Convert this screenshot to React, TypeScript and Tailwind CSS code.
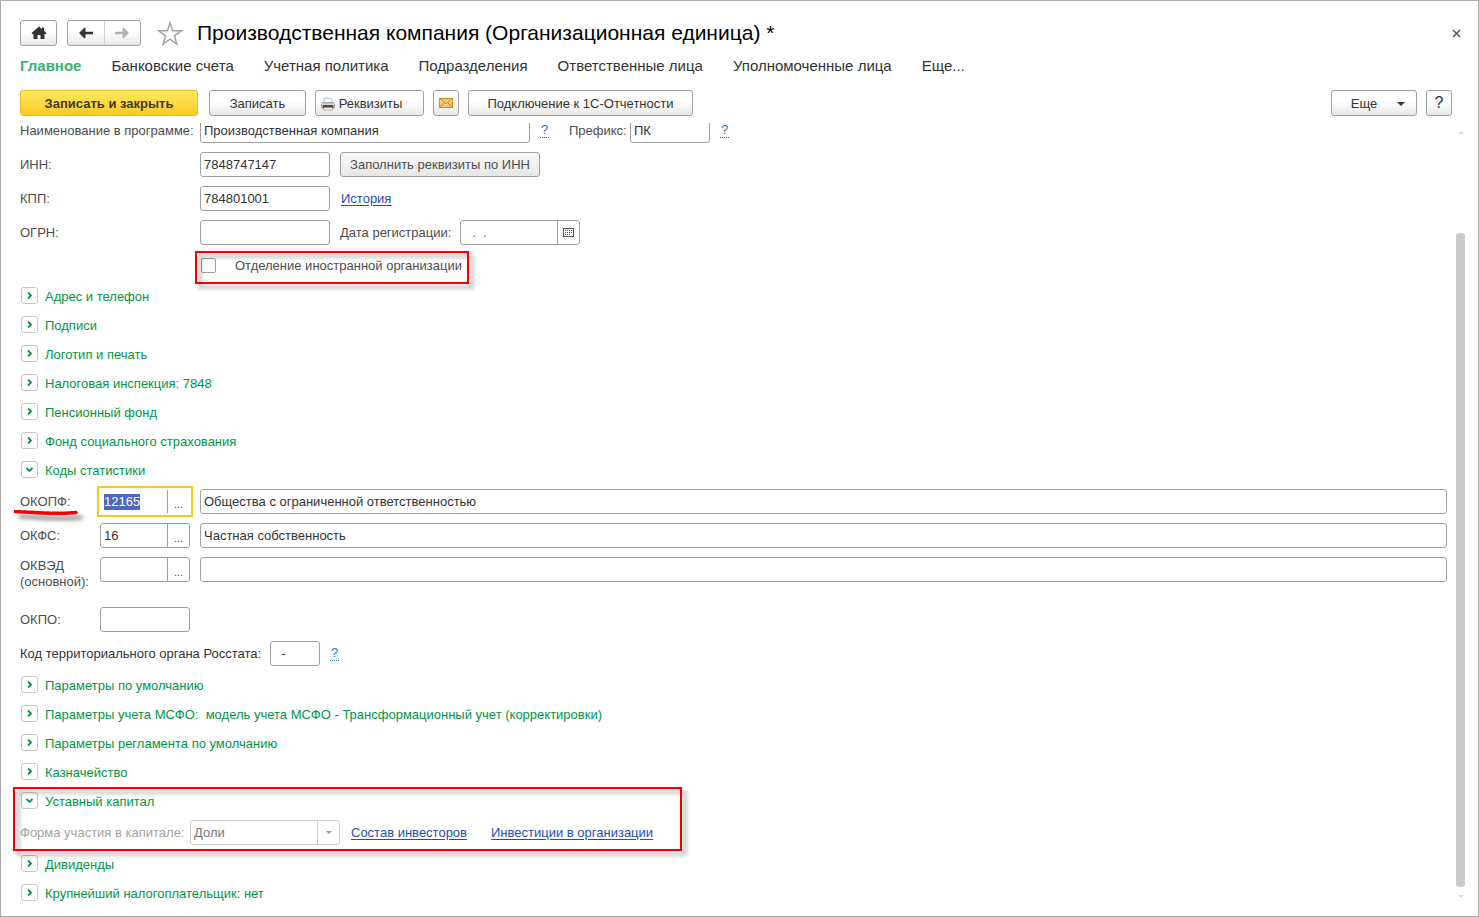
import { useEffect, useRef, useState } from 'react';
import type { ReactNode } from 'react';

const buttonLook =
  'flex h-[26px] items-center justify-center rounded-[3px] border border-[#a0a0a0] bg-linear-to-b from-white from-40% to-[#e9e9e9] text-[#333]';
const fieldLook =
  'h-[25px] rounded-[3px] border border-[#a0a0a0] bg-white px-[3px] text-[#333] outline-none';
const linkLook = 'text-[#1d50b5] underline underline-offset-2';

function HomeIcon() {
  return (
    <svg width="16" height="14" viewBox="0 0 16 14" fill="#333" aria-hidden="true">
      <path d="M8 0.500 0.500 7 1.500 8.200 2.500 7.700V13H6.500V9h3v4h4V7.700l1 .5 1-1.200L13 4.700V1.500h-2v1.600z" />
    </svg>
  );
}

function ArrowIcon({ color, flip }: { color: string; flip?: boolean }) {
  return (
    <svg width="14" height="12" viewBox="0 0 14 12" aria-hidden="true" className={flip ? 'rotate-180' : ''}>
      <path d="M5.500 0.500 6.500 1.500V4.700H14V7.300H6.500V10.500L5.500 11.500 0 6z" fill={color} />
    </svg>
  );
}

function StarIcon() {
  return (
    <svg width="26" height="25" viewBox="0 0 26 25" aria-hidden="true">
      <path
        d="M13 2l2.700 7.800h8.500l-6.800 5 2.500 8.200L13 18.100 6.100 23l2.500-8.200-6.800-5h8.500z"
        fill="none"
        stroke="#a3a3a3"
        strokeWidth="1.500"
      />
    </svg>
  );
}

function PrinterIcon() {
  return (
    <svg width="14" height="14" viewBox="0 0 14 14" aria-hidden="true">
      <path d="M3 6V1h6.500L11 2.500V6z" fill="#f4f8fb" stroke="#a9b8c4" strokeWidth="0.800" />
      <path d="M1.500 5h11l1.500 2v4l-1.500 1h-11L0 11V7z" fill="#b0aaa6" />
      <path d="M1 6.500h12v1.500H1z" fill="#dedad6" />
      <path d="M2 8h10v3H2z" fill="#4b4643" />
      <path d="M3 10.500h8l.5 2.500h-9z" fill="#f6f1ec" stroke="#8f8781" strokeWidth="0.600" />
      <path d="M11.500 9.500h1.500v1h-1.500z" fill="#d9702a" />
    </svg>
  );
}

function MailIcon() {
  return (
    <svg width="14" height="10" viewBox="0 0 14 10" aria-hidden="true">
      <rect x="0.500" y="0.500" width="13" height="9" fill="#f5c469" stroke="#c98a1f" />
      <path d="M1 2l6 5 6-5" fill="none" stroke="#fff3cf" strokeWidth="1" />
      <path d="M1 1l6 5 6-5M1 9l4.300-4.300M13 9L8.700 4.700" fill="none" stroke="#c98a1f" strokeWidth="1" />
    </svg>
  );
}

function CalendarIcon() {
  return (
    <svg width="11" height="9" viewBox="0 0 11 9" shapeRendering="crispEdges" aria-hidden="true">
      <path d="M0 0h11v9H0zM1 1v7h9V1z" fill="#555" fillRule="evenodd" />
      <path d="M2 2h1v1H2zM4 2h1v1H4zM6 2h1v1H6zM8 2h1v1H8zM2 4h1v1H2zM4 4h1v1H4zM6 4h1v1H6zM8 4h1v1H8zM2 6h1v1H2zM4 6h1v1H4zM6 6h1v1H6z" fill="#555" />
    </svg>
  );
}

function Caret({ color, up, width = 8 }: { color: string; up?: boolean; width?: number }) {
  return (
    <svg width={width} height={width / 2} viewBox="0 0 8 4" aria-hidden="true" className={up ? 'rotate-180' : ''}>
      <path d="M0 0h8L4 4z" fill={color} />
    </svg>
  );
}

function Help() {
  return (
    <a href="#help" className="w-[9px] border-b border-dotted border-[#1b78c2] text-center leading-[14px] text-[#1b78c2]">
      ?
    </a>
  );
}

function Section({ title, open: initial = false }: { title: string; open?: boolean }) {
  const [open, setOpen] = useState(initial);
  return (
    <button type="button" aria-expanded={open} onClick={() => setOpen(!open)} className="flex h-[29px] items-center gap-[7px] pl-px text-[#009646]">
      <span className="flex size-[17px] items-center justify-center rounded-[3px] border border-[#c6c6c6] bg-white">
        <svg width="7" height="7" viewBox="0 0 7 7" fill="none" stroke="#009646" strokeWidth="1.800" aria-hidden="true">
          <path d={open ? 'M0.500 2l3 3 3-3' : 'M2 0.500l3 3-3 3'} />
        </svg>
      </span>
      <span className="whitespace-pre pt-0.5">{title}</span>
    </button>
  );
}

function Row({ id, label, children }: { id: string; label: string; children: ReactNode }) {
  return (
    <div className="flex h-[25px] items-center">
      <label htmlFor={id} className="w-[180px] shrink-0">
        {label}
      </label>
      {children}
    </div>
  );
}

function CodeRow({ id, label, code, text, active }: { id: string; label: ReactNode; code: string; text: string; active?: boolean }) {
  const input = useRef<HTMLInputElement>(null);
  useEffect(() => {
    if (active) {
      input.current?.focus({ preventScroll: true });
      input.current?.select();
    }
  }, [active]);
  return (
    <div className="flex h-[25px] items-center">
      <label htmlFor={id} className="relative w-20 shrink-0 leading-4">
        {label}
      </label>
      <div
        className={
          active
            ? 'flex h-[25px] w-[90px] border border-transparent outline-2 outline-offset-1 outline-[#f8c721]'
            : 'flex h-[25px] w-[90px] rounded-[3px] border border-[#a0a0a0]'
        }
      >
        <input
          id={id}
          ref={input}
          defaultValue={code}
          className="w-0 flex-1 px-[3px] text-[#333] outline-none selection:bg-[#4d68c2] selection:text-white"
        />
        <button type="button" aria-label="Выбрать" className="w-[22px] border-l border-[#a0a0a0] pt-1 text-[11px]">
          ...
        </button>
      </div>
      <input aria-label="Описание кода" defaultValue={text} className={`${fieldLook} ml-2.5 min-w-0 flex-1`} />
    </div>
  );
}

const tabs = ['Банковские счета', 'Учетная политика', 'Подразделения', 'Ответственные лица', 'Уполномоченные лица', 'Еще...'];
const topSections = ['Адрес и телефон', 'Подписи', 'Логотип и печать', 'Налоговая инспекция: 7848', 'Пенсионный фонд', 'Фонд социального страхования'];
const lowerSections = [
  'Параметры по умолчанию',
  'Параметры учета МСФО:  модель учета МСФО - Трансформационный учет (корректировки)',
  'Параметры регламента по умолчанию',
  'Казначейство',
];

export default function App() {
  return (
    <div className="flex min-h-screen flex-col border border-[#ababab] bg-white pl-[19px] font-['Liberation_Sans',Arial,sans-serif] text-[13px] leading-4 text-[#4d4d4d]">
      <header className="flex items-center pt-[18px] pr-[13px]">
        <button type="button" aria-label="Начальная страница" className={`${buttonLook} w-[37px]`}>
          <HomeIcon />
        </button>
        <div className={`${buttonLook} ml-2.5 w-[74px]`}>
          <button type="button" aria-label="Назад" className="flex h-full flex-1 items-center justify-center border-r border-[#d0d0d0]">
            <ArrowIcon color="#333" />
          </button>
          <button type="button" aria-label="Вперед" className="flex h-full flex-1 items-center justify-center">
            <ArrowIcon color="#b3b3b3" flip />
          </button>
        </div>
        <button type="button" aria-label="В избранное" className="ml-4">
          <StarIcon />
        </button>
        <h1 className="ml-3.5 text-[21px] leading-7 text-black">Производственная компания (Организационная единица) *</h1>
        <button type="button" aria-label="Закрыть" className="ml-auto p-1">
          <svg width="9" height="9" viewBox="0 0 9 9" stroke="#555" strokeWidth="1.500" aria-hidden="true">
            <path d="M1 1l7 7M8 1L1 8" />
          </svg>
        </button>
      </header>

      <nav className="mt-[9px] flex gap-[30px] text-[15px] leading-5 text-[#333]">
        <a href="#main" className="font-bold text-[#3fae74]">
          Главное
        </a>
        {tabs.map((tab) => (
          <a key={tab} href="#tab">
            {tab}
          </a>
        ))}
      </nav>

      <div className="mt-3.5 flex gap-[9px] pr-[26px]">
        <button
          type="button"
          className="mr-0.5 h-[26px] w-[178px] rounded-[3px] border border-[#eebb1e] bg-linear-to-b from-[#ffe95f] to-[#fbcb1c] pt-px font-bold text-[#433a1c]"
        >
          Записать и закрыть
        </button>
        <button type="button" className={`${buttonLook} w-[97px] pt-px`}>
          Записать
        </button>
        <button type="button" className={`${buttonLook} w-[109px] gap-1 pt-px pr-4`}>
          <PrinterIcon />
          Реквизиты
        </button>
        <button type="button" aria-label="Отправить письмо" className={`${buttonLook} w-[26px]`}>
          <MailIcon />
        </button>
        <button type="button" className={`${buttonLook} w-[225px] pt-px`}>
          Подключение к 1С-Отчетности
        </button>
        <button type="button" className={`${buttonLook} ml-auto w-[86px] gap-5 pt-px pl-2`}>
          Еще
          <Caret color="#333" />
        </button>
        <button type="button" className={`${buttonLook} w-[26px] text-[16px]`}>
          ?
        </button>
      </div>

      <main className="-ml-[19px] mt-[7px] flex flex-1 overflow-hidden pr-[13px] pl-[19px]">
        <form className="-mt-[5px] flex min-w-0 flex-1 flex-col pr-[9px] pb-2" onSubmit={(e) => e.preventDefault()}>
          <div className="flex flex-col gap-[9px]">
            <Row id="name" label="Наименование в программе:">
              <input id="name" defaultValue="Производственная компания" className={`${fieldLook} w-[330px]`} />
              <div className="mr-5 ml-2.5 flex">
                <Help />
              </div>
              <label htmlFor="prefix" className="w-[61px]">
                Префикс:
              </label>
              <input id="prefix" defaultValue="ПК" className={`${fieldLook} w-20`} />
              <div className="ml-2.5 flex">
                <Help />
              </div>
            </Row>
            <Row id="inn" label="ИНН:">
              <input id="inn" defaultValue="7848747147" className={`${fieldLook} w-[130px]`} />
              <button
                type="button"
                className="ml-2.5 h-[25px] w-[200px] rounded-[3px] border border-[#a0a0a0] bg-linear-to-b from-[#fafafa] to-[#e6e6e6]"
              >
                Заполнить реквизиты по ИНН
              </button>
            </Row>
            <Row id="kpp" label="КПП:">
              <input id="kpp" defaultValue="784801001" className={`${fieldLook} w-[130px]`} />
              <a href="#history" className={`${linkLook} ml-[11px]`}>
                История
              </a>
            </Row>
            <Row id="ogrn" label="ОГРН:">
              <input id="ogrn" className={`${fieldLook} w-[130px]`} />
              <label htmlFor="date" className="ml-2.5 w-[120px]">
                Дата регистрации:
              </label>
              <div className="flex h-[25px] w-[120px] rounded-[3px] border border-[#a0a0a0]">
                <input id="date" defaultValue="  .  ." className="w-0 flex-1 px-1 text-[#3f5a78] outline-none" />
                <button type="button" aria-label="Календарь" className="flex w-[22px] items-center justify-center border-l border-[#a0a0a0]">
                  <CalendarIcon />
                </button>
              </div>
            </Row>
          </div>

          <div className="relative mt-1 ml-[181px] flex h-8 w-fit items-center">
            <input
              id="foreign"
              type="checkbox"
              className="size-[15px] appearance-none rounded-[2px] border border-[#a0a0a0] bg-white checked:bg-[#009646]"
            />
            <label htmlFor="foreign" className="ml-[19px] pt-0.5">
              Отделение иностранной организации
            </label>
            <div className="pointer-events-none absolute top-0.5 -bottom-[3px] -left-1.5 w-[274px] border-2 border-[#f50000] drop-shadow-[4px_4px_2px_rgba(0,0,0,0.4)]" />
          </div>

          <div className="flex flex-col items-start">
            {topSections.map((title) => (
              <Section key={title} title={title} />
            ))}
            <Section title="Коды статистики" open />
          </div>

          <div className="mt-[5px] flex flex-col gap-[9px]">
            <CodeRow
              id="okopf"
              active
              label={
                <>
                  ОКОПФ:
                  <svg
                    width="66"
                    height="6"
                    viewBox="0 0 66 6"
                    className="absolute top-4 -left-1.5 drop-shadow-[5px_5px_2px_rgba(0,0,0,0.5)]"
                    aria-hidden="true"
                  >
                    <path d="M1 1.500C20 2.500 45 4.500 62 2.500" fill="none" stroke="#f50000" strokeWidth="3.500" strokeLinecap="round" />
                  </svg>
                </>
              }
              code="12165"
              text="Общества с ограниченной ответственностью"
            />
            <CodeRow id="okfs" label="ОКФС:" code="16" text="Частная собственность" />
            <CodeRow
              id="okved"
              label={
                <span className="flex flex-col pt-2">
                  <span>ОКВЭД</span>
                  <span>(основной):</span>
                </span>
              }
              code=""
              text=""
            />
          </div>

          <div className="mt-[25px] flex h-[25px] items-center">
            <label htmlFor="okpo" className="w-20">
              ОКПО:
            </label>
            <input id="okpo" className={`${fieldLook} w-[90px]`} />
          </div>
          <div className="mt-[9px] flex h-[25px] items-center">
            <label htmlFor="rosstat" className="w-[250px] text-[#333]">
              Код территориального органа Росстата:
            </label>
            <input id="rosstat" defaultValue="  -" className={`${fieldLook} w-[50px]`} />
            <div className="ml-2.5 flex">
              <Help />
            </div>
          </div>

          <div className="mt-1 flex flex-col items-start">
            {lowerSections.map((title) => (
              <Section key={title} title={title} />
            ))}
          </div>

          <div className="relative w-fit pb-1">
            <Section title="Уставный капитал" open />
            <div className="mt-[5px] flex h-[25px] items-center">
              <label htmlFor="capital" className="w-[170px] text-[#a3a3a3]">
                Форма участия в капитале:
              </label>
              <div className="flex h-[25px] w-[150px] rounded-[3px] border border-[#cfcfcf]">
                <select id="capital" disabled className="w-0 flex-1 appearance-none bg-transparent px-[3px] text-[#777] opacity-100">
                  <option>Доли</option>
                </select>
                <span className="flex w-[22px] items-center justify-center border-l border-[#cfcfcf]">
                  <Caret color="#999" width={6} />
                </span>
              </div>
              <a href="#investors" className={`${linkLook} ml-[11px]`}>
                Состав инвесторов
              </a>
              <a href="#investments" className={`${linkLook} ml-6`}>
                Инвестиции в организации
              </a>
            </div>
            <div className="pointer-events-none absolute top-px -bottom-0.5 -left-[7px] w-[669px] border-2 border-[#f50000] drop-shadow-[4px_4px_2px_rgba(0,0,0,0.4)]" />
          </div>

          <div className="flex flex-col items-start">
            <Section title="Дивиденды" />
            <Section title="Крупнейший налогоплательщик: нет" />
          </div>
        </form>

        <div className="flex w-[9px] flex-col items-center pt-2 pb-[18px]">
          <Caret color="#dcdcdc" up width={6} />
          <div className="mt-[99px] mb-2 w-full flex-1 rounded-[3px] bg-[#cacaca]" />
          <Caret color="#dcdcdc" width={6} />
        </div>
      </main>
    </div>
  );
}
